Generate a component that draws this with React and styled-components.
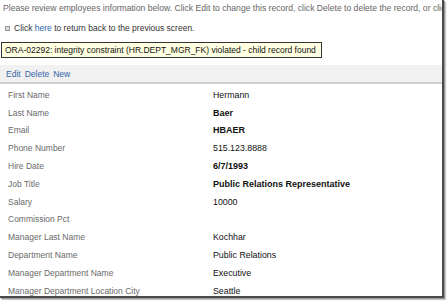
import React from "react";
import styled, { createGlobalStyle } from "styled-components";

const GlobalStyle = createGlobalStyle`
	html, body {
		margin: 0;
		padding: 0;
		background: #fff;
		width: 447px;
		height: 303px;
		overflow: hidden;
	}
`;

const Frame = styled.div`
	width: 442px;
	height: 296px;
	border-right: 2px solid #4a4a4a;
	border-bottom: 2px solid #4a4a4a;
	box-shadow: 1px 1px 0 #9a9a9a, 2px 2px 1px #c8c8c8;
	background: #fff;
	overflow: hidden;
	font-family: "Liberation Sans", Arial, sans-serif;
	color: #555;
`;

const Intro = styled.div`
	font-size: 8.6px;
	line-height: 10px;
	padding: 3px 0 0 3px;
	white-space: nowrap;
	color: #666;
`;

const BackLine = styled.div`
	display: flex;
	align-items: center;
	gap: 4px;
	margin-top: 10px;
	padding-left: 5px;
	font-size: 8.5px;
	line-height: 11px;
	color: #333;
`;

const Bullet = styled.span`
	width: 3px;
	height: 3px;
	border: 1px solid #999;
	background: #ddd;
`;

const Link = styled.span`
	color: #2a5fa8;
`;

const ErrorBox = styled.div`
	margin: 8px 0 0 1px;
	width: 316px;
	height: 14px;
	border: 1px solid #333;
	background: #ffffe1;
	color: #111;
	font-size: 8.5px;
	line-height: 14px;
	padding-left: 3px;
	white-space: nowrap;
`;

const Toolbar = styled.div`
	display: flex;
	gap: 4px;
	margin-top: 7px;
	height: 17px;
	align-items: center;
	padding-left: 6px;
	background: #f1f1f1;
	border-bottom: 2px solid #cfcfcf;
	font-size: 8.5px;
`;

const ToolLink = styled.span`
	color: #3366aa;
`;

const Fields = styled.div`
	display: grid;
	grid-template-columns: 205px 1fr;
	grid-auto-rows: 17.8px;
	padding: 2px 0 0 8px;
	align-items: center;
`;

const Label = styled.div`
	font-size: 8.5px;
	line-height: 10px;
	color: #6a6a6a;
	white-space: nowrap;
`;

const Value = styled.div`
	font-size: ${props => (props.bold ? "9px" : "8.8px")};
	font-weight: ${props => (props.bold ? "bold" : "normal")};
	line-height: 10px;
	color: #111;
	white-space: nowrap;
`;

const rows = [
	["First Name", "Hermann"],
	["Last Name", "Baer", true],
	["Email", "HBAER", true],
	["Phone Number", "515.123.8888"],
	["Hire Date", "6/7/1993", true],
	["Job Title", "Public Relations Representative", true],
	["Salary", "10000"],
	["Commission Pct", ""],
	["Manager Last Name", "Kochhar"],
	["Department Name", "Public Relations"],
	["Manager Department Name", "Executive"],
	["Manager Department Location City", "Seattle"]
];

export default function App() {
	return (
		<>
			<GlobalStyle />
			<Frame>
				<Intro>
					Please review employees information below. Click Edit to change this record, click Delete to delete the
					record, or click Back to return.
				</Intro>
				<BackLine>
					<Bullet />
					<span>
						Click <Link>here</Link> to return back to the previous screen.
					</span>
				</BackLine>
				<ErrorBox>ORA-02292: integrity constraint (HR.DEPT_MGR_FK) violated - child record found</ErrorBox>
				<Toolbar>
					<ToolLink>Edit</ToolLink>
					<ToolLink>Delete</ToolLink>
					<ToolLink>New</ToolLink>
				</Toolbar>
				<Fields>
					{rows.map(([label, value, bold]) => (
						<React.Fragment key={label}>
							<Label>{label}</Label>
							<Value bold={bold}>{value}</Value>
						</React.Fragment>
					))}
				</Fields>
			</Frame>
		</>
	);
}
